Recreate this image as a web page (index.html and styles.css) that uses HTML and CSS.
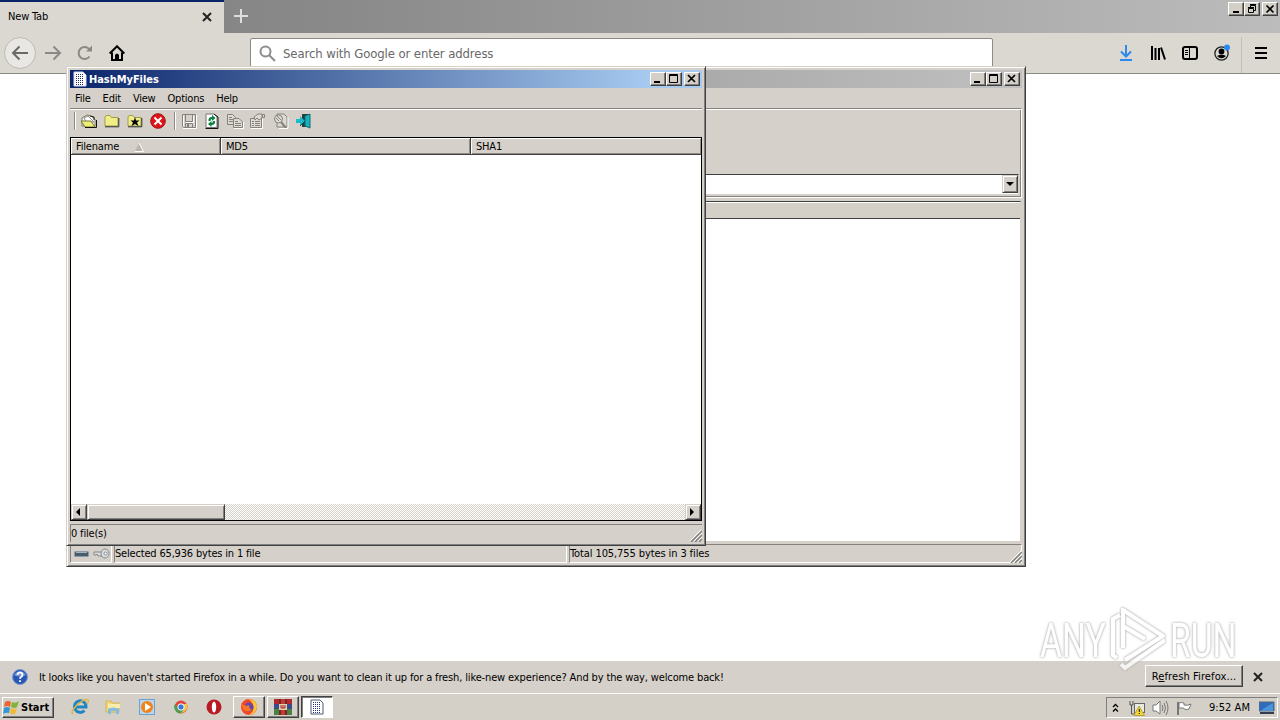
FILE: index.html
```html
<!DOCTYPE html>
<html lang="en">
  <head>
    <meta charset="UTF-8">
    <title>New Tab</title>
    <link rel="stylesheet" href="styles.css">
  </head>
  <body>
    <div class="browser">
      <div class="tabs">
        <div class="tab"><span class="tab-title">New Tab</span>
          <svg width="10" height="10"><path d="M1 1L9 9M9 1L1 9" stroke="#222" stroke-width="2"/></svg>
        </div>
        <svg class="plus" width="14" height="14"><path d="M7 0V14M0 7H14" stroke="#dedede" stroke-width="2"/></svg>
        <div class="controls">
          <span class="btn"><svg width="12" height="10"><path d="M3 8H9" stroke="#000" stroke-width="2"/></svg></span>
          <span class="btn"><svg width="12" height="10" fill="none" stroke="#000"><path d="M4.500 3V1.500H9.500V6.500H8M4 .500H10M2.500 4.500H7.500V8.500H2.500ZM2 3.500H8"/></svg></span>
          <span class="btn close"><svg width="12" height="10"><path d="M2.500 1.500L9.500 8.500M9.500 1.500L2.500 8.500" stroke="#000" stroke-width="1.700"/></svg></span>
        </div>
      </div>
      <div class="nav">
        <div class="nav-left">
          <span class="tool back"><svg width="18" height="16" fill="none" stroke="#6b6966" stroke-width="2"><path d="M17 8H2M8.500 1.500L2 8L8.500 14.500"/></svg></span>
          <span class="tool"><svg width="18" height="16" fill="none" stroke="#8b8986" stroke-width="2"><path d="M1 8H16M9.500 1.500L16 8L9.500 14.500"/></svg></span>
          <span class="tool"><svg width="16" height="16" fill="none" stroke="#8b8986" stroke-width="2"><path d="M12.500 11.500A6 6 0 1 1 12.500 4.500"/><path d="M9 6.500H15V0.500Z" fill="#8b8986" stroke="none"/></svg></span>
          <span class="tool"><svg width="16" height="16" fill="none" stroke="#000" stroke-width="2"><path d="M.7 8.500L8 1.300L15.300 8.500M3 7.500V15H13V7.500"/><path d="M6 15V10Q8 7 10 10V15Z" fill="#000" stroke="none"/></svg></span>
        </div>
        <div class="search">
          <svg width="17" height="17" fill="none" stroke="#8c8c8c" stroke-width="2"><circle cx="6.500" cy="6.500" r="5"/><path d="M10 10L16 16"/></svg>
          <span>Search with Google or enter address</span>
        </div>
        <div class="nav-right">
          <span class="tool"><svg width="14" height="16" fill="none" stroke="#2a8af0" stroke-width="2"><path d="M7 0V11M2 6.500L7 11.500L12 6.500M1 15H13"/></svg></span>
          <span class="tool"><svg width="16" height="16" stroke="#000" stroke-width="2"><path d="M2 1V15M5.500 3V15M9 3V15M11 2.500L15 14.500"/></svg></span>
          <span class="tool"><svg width="16" height="14" fill="none" stroke="#000"><rect x="1" y="1" width="14" height="12" rx="2" stroke-width="2"/><path d="M7.500 1V13M3 4.500H6M3 6.500H6M3 8.500H6"/></svg></span>
          <span class="tool"><svg width="18" height="18"><circle cx="8.500" cy="9.500" r="6.600" fill="none" stroke="#222" stroke-width="1.300"/><circle cx="8.500" cy="7.500" r="2.900"/><path d="M4 12Q8.500 9.500 13 12Q8.500 16.500 4 12Z"/><circle cx="14" cy="3.500" r="3" fill="#2a8af0"/></svg></span>
          <span class="nav-sep"></span>
          <span class="tool"><svg width="12" height="14" stroke="#000" stroke-width="2"><path d="M0 2H12M0 7H12M0 12H12"/></svg></span>
        </div>
      </div>
      <div class="page"></div>
      <div class="notice">
        <svg class="help" width="16" height="16"><circle cx="8" cy="8" r="7.500" fill="#2857b4" stroke="#7c98cf"/><path d="M2 6Q8 -2 14 6Q8 9 2 6" fill="#7097db"/><path d="M5.500 6Q5.500 3.700 8 3.700T10.500 6Q10.500 7 9 8Q8 8.700 8 9.800M8 11.300V13" fill="none" stroke="#fff" stroke-width="1.800"/></svg>
        <span class="notice-text">It looks like you haven't started Firefox in a while. Do you want to clean it up for a fresh, like-new experience? And by the way, welcome back!</span>
        <button class="refresh">R<u>e</u>fresh Firefox...</button>
        <svg class="dismiss" width="10" height="10"><path d="M1 1L9 9M9 1L1 9" stroke="#222" stroke-width="2"/></svg>
      </div>
    </div>

    <div class="window archive">
      <div class="caption inactive">
        <div class="controls">
          <span class="btn"><svg width="12" height="10"><path d="M2 8H8" stroke="#000" stroke-width="2"/></svg></span>
          <span class="btn"><svg width="12" height="10" fill="none" stroke="#000"><path d="M1.500 .500H9.500V8.500H1.500ZM1 1.500H10"/></svg></span>
          <span class="btn close"><svg width="12" height="10"><path d="M2 1L9 8M9 1L2 8" stroke="#000" stroke-width="1.700"/></svg></span>
        </div>
      </div>
      <div class="panel">
        <div class="combo"><span class="drop"><svg width="8" height="4"><path d="M0 0H8L4 4Z"/></svg></span></div>
      </div>
      <div class="files"><div class="files-head"></div></div>
      <div class="archive-status">
        <div class="cell icons">
          <svg width="16" height="8"><rect x=".5" y="1.500" width="14" height="5" rx="1" fill="#4a5d6c" stroke="#8c9aa6"/><path d="M2 2.500H13" stroke="#a7b4bd"/></svg>
          <svg width="17" height="11" fill="none" stroke="#85898c"><path d="M9 4H1V7H3L4 6L5 8H9" fill="#d9dcdd"/><ellipse cx="12" cy="5.500" rx="4" ry="4.500" fill="#d9dcdd"/><circle cx="12.500" cy="5.500" r="1.500" fill="#fff"/></svg>
        </div>
        <div class="cell selected">Selected 65,936 bytes in 1 file</div>
        <div class="cell total">Total 105,755 bytes in 3 files</div>
        <svg class="grip" width="12" height="12"><path d="M1 12L12 1M5 12L12 5M9 12L12 9" stroke="#808080" stroke-width="1.500"/><path d="M0 11L11 0M4 11L12 3M8 11L12 7" stroke="#fff"/></svg>
      </div>
    </div>

    <div class="window hash">
      <div class="caption">
        <svg class="app-icon" width="14" height="16"><path d="M1 1H10L13 4V15H1Z" fill="#fff" stroke="#d5d8e8"/><path d="M3 3.500H11M3 5.500H11M3 7.500H11M3 9.500H11M3 11.500H11M3 13.500H11" stroke="#20275f" stroke-dasharray="1 1"/></svg>
        <span class="title">HashMyFiles</span>
        <div class="controls">
          <span class="btn"><svg width="12" height="10"><path d="M2 8H8" stroke="#000" stroke-width="2"/></svg></span>
          <span class="btn"><svg width="12" height="10" fill="none" stroke="#000"><path d="M1.500 .500H9.500V8.500H1.500ZM1 1.500H10"/></svg></span>
          <span class="btn close"><svg width="12" height="10"><path d="M2 1L9 8M9 1L2 8" stroke="#000" stroke-width="1.700"/></svg></span>
        </div>
      </div>
      <div class="menu"><span>File</span><span>Edit</span><span>View</span><span>Options</span><span>Help</span></div>
      <div class="toolbar">
        <i class="sep"></i>
        <span class="ico"><svg width="16" height="14"><path d="M1 12V4L6 1L10 2L14 5V12Z" fill="#fff" stroke="#7d7c59"/><path d="M3 4L7 2L13 8H5Z" fill="#fff" stroke="#888"/><path d="M0 7H10L14 13H4Z" fill="#eeee76" stroke="#77763c"/><path d="M4 13.500H15.500V6M9 2L13 3V6" fill="none" stroke="#111"/></svg></span>
        <span class="ico"><svg width="16" height="14"><path d="M1 12V3L2 1.500H6L7.500 3.500H14V12Z" fill="#f0ee86" stroke="#a09d4c"/><path d="M1 12.800H14.800V4" fill="none" stroke="#333"/></svg></span>
        <span class="ico"><svg width="16" height="14"><path d="M1 12V3L2 1.500H6L7.500 3.500H14V12Z" fill="#f0ee86" stroke="#a09d4c"/><path d="M1 12.800H14.800V4" fill="none" stroke="#333"/><path d="M8 3L9 6.500H12.500L10 8.500L11.500 12L8 10L4.500 12L6 8.500L3.500 6.500H7Z"/></svg></span>
        <span class="ico"><svg width="16" height="16"><circle cx="8" cy="8" r="7.300" fill="#e01418" stroke="#9d1515"/><path d="M4.500 4.500L11.500 11.500M11.500 4.500L4.500 11.500" stroke="#fff" stroke-width="2"/></svg></span>
        <i class="sep second"></i>
        <span class="ico"><svg width="16" height="16" fill="none"><path d="M1.500 1.500H14.500V14.500H2.500L1.500 13.500ZM4.500 2V8.500H11.500V2M4.500 14V10.500H11.500V14" stroke="#85827d"/><path d="M6 11H8V14H6Z" fill="#85827d"/><path d="M2 15.500H15.500V2M5 9.500H12.500V3M2.500 2.500V13" stroke="#fff"/></svg></span>
        <span class="ico"><svg width="14" height="16"><path d="M1 1H9L12 4V14.500H1Z" fill="#fff" stroke="#777"/><path d="M.5 15.500H13V4L9 1" fill="none" stroke="#111"/><path d="M3.500 8Q3 4 7 4V2L10.500 5L7 8V6Q5.500 6 5.500 8ZM10 8Q10.500 12 6.500 12V14L3 11L6.500 8V10Q8 10 8 8Z" fill="#08813c"/></svg></span>
        <span class="ico"><svg width="18" height="16" fill="#ddd9d3" stroke="#85827d"><path d="M1.500 1.500H6.500L9.500 4.500V11.500H1.500ZM3 4.500H6M3 6.500H8M3 8.500H8"/><path d="M7.500 5.500H13L16.500 9V14.500H7.500ZM9 8.500H12M9 10.500H15M9 12.500H15"/><path d="M8 15.500H17.500V9" fill="none" stroke="#fff"/></svg></span>
        <span class="ico"><svg width="17" height="16" fill="#ddd9d3" stroke="#85827d"><path d="M1.500 5.500H12.500V14.500H1.500ZM3 8.500H5M3 10.500H5M3 12.500H5M6 8.500H11M6 10.500H11M6 12.500H11"/><path d="M5 4L9 1H13V5L10 7L8 5L6 7Z"/><path d="M13.500 1.500H15.500V4.500H13.500Z"/><path d="M2 15.500H13.500V6" fill="none" stroke="#fff"/></svg></span>
        <span class="ico"><svg width="16" height="16" fill="#ddd9d3" stroke="#85827d"><path d="M4 1H11L14 4V14H4Z"/><circle cx="5.500" cy="6" r="4"/><path d="M8 9L13 15" stroke-width="2"/><path d="M3 5L6 8M4 3L8 7"/><path d="M6 15.500H15V4" fill="none" stroke="#fff"/></svg></span>
        <span class="ico"><svg width="16" height="16"><path d="M6 1H14V14H6Z" fill="#263f3f"/><path d="M9 3L14 1V15L9 13Z" fill="#17b4bd" stroke="#156d75"/><path d="M0 6H4V3L9 8L4 13V10H0Z" fill="#1cbbc9"/><path d="M4 13L9 8" stroke="#174e55"/></svg></span>
      </div>
      <div class="list">
        <div class="list-head">
          <span class="col filename"><span>Filename</span><svg width="10" height="9"><path d="M5 0L9 8H1Z" fill="#bab6af"/><path d="M5 0L9.500 8.500H1" fill="none" stroke="#fff"/></svg></span><span class="col md5">MD5</span><span class="col sha">SHA1</span>
        </div>
        <div class="rows"></div>
        <div class="scroll">
          <span class="arrow"><svg width="4" height="8"><path d="M4 0V8L0 4Z"/></svg></span>
          <span class="thumb"></span>
          <span class="arrow end"><svg width="4" height="8"><path d="M0 0V8L4 4Z"/></svg></span>
        </div>
      </div>
      <div class="status"><span>0 file(s)</span>
        <svg class="grip" width="12" height="12"><path d="M1 12L12 1M5 12L12 5M9 12L12 9" stroke="#808080" stroke-width="1.500"/><path d="M0 11L11 0M4 11L12 3M8 11L12 7" stroke="#fff"/></svg>
      </div>
    </div>

    <div class="taskbar">
      <button class="start"><svg width="17" height="16"><path d="M2 2Q5 0 8 2L7 7Q4 5 1 7Z" fill="#ef642b"/><path d="M9 2Q12 4 16 1L14 7Q11 9 8 7Z" fill="#82b43b"/><path d="M1 8Q4 6 7 8L6 13Q3 12 0 14Z" fill="#3298d4"/><path d="M8 8Q11 10 14 8L12 14Q9 15 7 13Z" fill="#f3b936"/></svg><span>Start</span></button>
      <div class="quick">
        <span><svg width="18" height="18" fill="none"><path d="M13.500 12.500A5.800 5.800 0 1 1 15 9H5" stroke="#2185c4" stroke-width="3"/><path d="M2 16Q-1 14 6 7Q14 0 17 2Q18 3 16 6" stroke="#e2b53e" stroke-width="1.500"/></svg></span>
        <span><svg width="16" height="16"><path d="M1 2H6L7 4H14V13H1Z" fill="#efd77a" stroke="#d1b65b"/><path d="M3 5H15V9H3Z" fill="#f9ebac"/><path d="M3 15V10Q8 7 14 10V15H11V12H6V15Z" fill="#84bbdf"/></svg></span>
        <span><svg width="16" height="16"><rect x=".5" y=".5" width="15" height="15" fill="#b7d7ee" stroke="#6ca2cf"/><circle cx="8" cy="8" r="6" fill="#f18419"/><path d="M6 4L12 8L6 12Z" fill="#fff"/></svg></span>
        <span><svg width="14" height="14"><circle cx="7" cy="7" r="6.500" fill="#e2463a"/><path d="M1 4L6 13.500A6.500 6.500 0 0 1 1 4" fill="#3ba757"/><path d="M8 4H13Q15 11 6 13.500L10 8Z" fill="#f4c642"/><path d="M1 4L7 13.500L10 9L4 7Z" fill="#3ba757"/><circle cx="7" cy="7" r="3.200" fill="#3679dc" stroke="#fff"/></svg></span>
        <span><svg width="16" height="16"><circle cx="8" cy="8" r="7.500" fill="#b91920"/><ellipse cx="8" cy="8" rx="2.200" ry="5.500" fill="#fff"/></svg></span>
      </div>
      <div class="tasks">
        <span class="task"><svg width="18" height="18"><circle cx="9" cy="9" r="8" fill="#f34728"/><path d="M8 1Q17 2 17 9Q16 16 9 17Q15 13 13 7Q12 3 8 1" fill="#ffc52d"/><circle cx="9" cy="9" r="4.500" fill="#6446b2"/><path d="M1 5Q4 9 9 7Q9 11 12 12Q7 15 3 11Z" fill="#f77724"/></svg></span>
        <span class="task"><svg width="18" height="16"><path d="M0 0H18V5H0Z" fill="#b3282f"/><path d="M0 5H18V10H0Z" fill="#394c8d"/><path d="M0 10H18V16H0Z" fill="#4c8145"/><path d="M5 0H7V16H5ZM11 0H13V16H11Z" fill="#6e2b20"/><path d="M7 0H11V16H7Z" fill="#c9363a"/><path d="M5 5H13V11H5Z" fill="#e8d0aa"/><path d="M7 6V9H11V6M9 6V9" stroke="#a12627" fill="none"/></svg></span>
        <span class="task pressed"><svg width="14" height="16"><path d="M1 1H10L13 4V15H1Z" fill="#fff" stroke="#50586d"/><path d="M3 3.500H11M3 5.500H11M3 7.500H11M3 9.500H11M3 11.500H11M3 13.500H11" stroke="#252e8a" stroke-dasharray="1 1"/></svg></span>
      </div>
      <div class="tray">
        <svg class="chev" width="7" height="10" fill="none" stroke="#000" stroke-width="1.300"><path d="M1 4L3.500 1.500L6 4M1 8.500L3.500 6L6 8.500"/></svg>
        <svg class="net" width="16" height="16"><path d="M1 1V5H4V1M2.500 5V14H7" fill="none" stroke="#555"/><rect x="5.500" y="3.500" width="10" height="9" fill="#e8e8e5" stroke="#666"/><path d="M10 6L15.500 15.500H5Z" fill="#f3d631" stroke="#b6a33b"/><path d="M10.300 9V12M10.300 13V14" stroke="#111"/></svg>
        <svg class="sound" width="17" height="16" fill="none" stroke="#777"><path d="M1 5H4L8 1V14L4 11H1Z" fill="#fff"/><path d="M10 5Q12 8 10 11M12 3Q15 8 12 13M14 1Q18 8 14 15"/></svg>
        <svg class="flag" width="16" height="16"><path d="M2 2V15" stroke="#777" stroke-width="2"/><path d="M3 3Q5 2 8 3V5Q11 6 15 4L13 9Q10 11 7 8H3Z" fill="#fff" stroke="#777"/></svg>
        <span class="clock">9:52 AM</span>
        <svg class="desk" width="16" height="14"><path d="M0 1H15V10H0Z" fill="#316cbc" stroke="#5b6676"/><path d="M1 10L14 2V10Z" fill="#4a94d9"/><path d="M1 12H15" stroke="#343d50" stroke-width="2"/></svg>
      </div>
    </div>

    <div class="watermark">
      <span class="word">ANY</span>
      <svg width="56" height="66" fill="none" stroke="#fff" stroke-width="4"><path d="M11 7L4 11V47L8 50M14 40V2L54 28L16 52M14 18L36 31M12 56L16 60L56 32"/></svg>
      <span class="word">RUN</span>
    </div>
  </body>
</html>
```

FILE: styles.css
```css
* {
    box-sizing: border-box;
}
body {
    margin: 0;
    width: 1280px;
    height: 720px;
    overflow: hidden;
    display: flex;
    flex-direction: column;
    background: #fff;
    color: #000;
    font: 11px/14px "DejaVu Sans Condensed", "DejaVu Sans", sans-serif;
    font-stretch: condensed;
    letter-spacing: -0.18px;
    white-space: nowrap;
}
svg {
    display: block;
    flex: none;
}
button {
    font: inherit;
    letter-spacing: inherit;
    color: inherit;
    padding: 0;
}
.browser {
    flex: 1;
    display: flex;
    flex-direction: column;
}
.tabs {
    height: 33px;
    display: flex;
    background: linear-gradient(90deg, #808080, #898989 25%, #bcbcbc);
}
.tab {
    width: 224px;
    padding: 0 12px 1px 8px;
    display: flex;
    align-items: center;
    justify-content: space-between;
    background: #dbd8d2;
    border-top: 2px solid #0a246a;
}
.plus {
    margin: 9px 0 0 10px;
}
.controls {
    margin-left: auto;
    display: flex;
}
.tabs .controls {
    padding: 2px 2px 0 0;
}
.btn {
    width: 16px;
    height: 14px;
    padding: 1px;
    background: #d4d0c8;
    border: 1px solid;
    border-color: #fff #404040 #404040 #fff;
    box-shadow: inset -1px -1px #808080;
}
.btn.close {
    margin-left: 2px;
}
.nav {
    height: 41px;
    display: flex;
    background: #dbd8d2;
    border-bottom: 1px solid #8b8984;
}
.nav-left {
    width: 250px;
    padding: 4px 0 0 4px;
    display: flex;
}
.tool {
    width: 32px;
    height: 32px;
    display: flex;
    align-items: center;
    justify-content: center;
}
.back {
    margin-right: 1px;
    background: #e9e7e3;
    border: 1px solid #bdbab5;
    border-radius: 50%;
}
.search {
    width: 743px;
    height: 32px;
    margin-top: 5px;
    padding: 0 8px 1px;
    display: flex;
    align-items: center;
    gap: 7px;
    background: #fff;
    border: 1px solid #8e8b87;
    border-radius: 2px;
    color: #686868;
    font-size: 13px;
    letter-spacing: -0.1px;
}
.nav-right {
    margin-left: auto;
    padding: 4px 3px 0 0;
    display: flex;
}
.nav-sep {
    width: 1px;
    margin: 0 3px;
    background: #c3c0bb;
}
.page {
    flex: 1;
}
.notice {
    height: 32px;
    padding: 0 17px 0 12px;
    display: flex;
    align-items: center;
    background: #d5d0c9;
}
.notice-text {
    margin: 1px 0 0 11px;
    letter-spacing: -0.14px;
}
.refresh {
    width: 98px;
    height: 22px;
    margin: -2px 10px 0 auto;
    padding-top: 1px;
    background: #d5d0c9;
    border: 1px solid;
    border-color: #fff #404040 #404040 #fff;
    box-shadow: inset -1px -1px #808080;
    letter-spacing: 0.1px;
}

/* windows */
.window {
    position: absolute;
    left: 66px;
    top: 66px;
    padding: 2px;
    display: flex;
    flex-direction: column;
    background: #d5d0c9;
    border: 1px solid;
    border-color: #d4d0c8 #404040 #404040 #d4d0c8;
    box-shadow: inset 1px 1px #fff, inset -1px -1px #808080;
}
.archive {
    width: 960px;
    height: 501px;
}
.hash {
    width: 640px;
    height: 480px;
    padding: 3px;
}
.caption {
    height: 18px;
    padding: 0 2px 0 3px;
    display: flex;
    align-items: center;
    background: linear-gradient(90deg, #0a246a, #a6caf0 92%);
}
.inactive {
    margin: 1px;
    background: linear-gradient(90deg, #808080, #c0c0c0);
}
.title {
    margin: 1px 0 0 2px;
    color: #fff;
    font-weight: bold;
    letter-spacing: -0.05px;
}
.menu {
    height: 20px;
    padding: 4px 5px 2px;
    display: flex;
    letter-spacing: -0.22px;
}
.menu span {
    margin-right: 12px;
}
.toolbar {
    height: 29px;
    padding: 0 0 4px 4px;
    display: flex;
    align-items: center;
    border-top: 1px solid #85827d;
    box-shadow: inset 0 1px #fff;
}
.sep {
    width: 2px;
    height: 18px;
    margin-right: 1px;
    background: #8b8883;
    border-right: 1px solid #fff;
}
.sep.second {
    margin-left: 5px;
}
.ico {
    width: 23px;
    display: flex;
    justify-content: center;
}
.list {
    height: 384px;
    display: flex;
    flex-direction: column;
    border: 1px solid #000;
    background: #fff;
}
.list-head {
    height: 17px;
    display: flex;
    background: #d5d0c9;
    border-bottom: 1px solid #404040;
}
.col {
    padding: 2px 5px 0;
    border-right: 1px solid #404040;
    box-shadow: inset 1px 1px #fff, inset -1px -1px #908d87;
}
.filename {
    width: 150px;
    display: flex;
    align-items: center;
    gap: 15px;
}
.md5 {
    width: 250px;
}
.sha {
    flex: 1;
    border: 0;
}
.rows {
    flex: 1;
}
.scroll {
    height: 16px;
    display: flex;
    background: repeating-conic-gradient(#fff 0 25%, #d4d0c8 0 50%) 0 0 / 2px 2px;
}
.arrow, .thumb, .drop {
    display: flex;
    align-items: center;
    justify-content: center;
    background: #d5d0c9;
    border: 1px solid;
    border-color: #d4d0c8 #404040 #404040 #d4d0c8;
    box-shadow: inset 1px 1px #fff, inset -1px -1px #808080;
}
.arrow {
    width: 16px;
    padding: 0 2px 1px 0;
}
.thumb {
    width: 138px;
}
.end {
    margin-left: auto;
}
.status {
    flex: 1;
    margin-top: 3px;
    display: flex;
    align-items: center;
    justify-content: space-between;
    border-top: 1px solid #85827d;
    border-left: 1px solid #85827d;
}
.grip {
    align-self: flex-end;
}
.panel {
    height: 90px;
    margin: 19px 1px 0;
    padding: 0 2px 2px 1px;
    display: flex;
    align-items: flex-end;
    border: 1px solid;
    border-color: #85827d #fff #fff #85827d;
    box-shadow: inset 0 1px #fff, inset -1px -1px #85827d;
}
.combo {
    width: 100%;
    height: 21px;
    padding-bottom: 1px;
    display: flex;
    justify-content: flex-end;
    background: #fff;
    border: 1px solid;
    border-color: #404040 #d4d0c8 #d4d0c8 #404040;
}
.drop {
    width: 16px;
}
.files {
    flex: 1;
    margin: 3px 2px 0 1px;
    background: #fff;
    border: 1px solid;
    border-color: #404040 #d4d0c8 #d4d0c8 #404040;
}
.files-head {
    height: 17px;
    background: #d4d0c8;
    border-top: 1px solid #fff;
    border-bottom: 1px solid #404040;
}
.archive-status {
    height: 19px;
    margin: 2px 1px 1px;
    display: flex;
    gap: 2px;
}
.cell {
    padding-top: 2px;
    border: 1px solid;
    border-color: #85827d #fff #fff #85827d;
}
.icons {
    width: 42px;
    padding: 0 0 0 2px;
    display: flex;
    align-items: center;
    justify-content: center;
    gap: 3px;
}
.selected {
    width: 453px;
}
.total {
    flex: 1;
    margin-right: -14px;
    letter-spacing: -0.1px;
}

/* taskbar */
.taskbar {
    height: 27px;
    padding: 2px 2px 1px;
    display: flex;
    background: #d4d0c8;
    border-top: 1px solid #fff;
}
.start {
    width: 52px;
    height: 21px;
    margin-top: 1px;
    display: flex;
    align-items: center;
    gap: 1px;
    background: #d4d0c8;
    border: 1px solid;
    border-color: #fff #404040 #404040 #fff;
    box-shadow: inset -1px -1px #808080;
    font-weight: bold;
    letter-spacing: 0;
}
.quick {
    width: 168px;
    margin-left: 9px;
    padding-bottom: 2px;
    display: flex;
}
.quick span {
    width: 33.600px;
    display: flex;
    align-items: center;
    justify-content: center;
}
.tasks {
    margin-left: 2px;
    display: flex;
    gap: 2px;
}
.task {
    width: 32px;
    height: 22px;
    display: flex;
    align-items: center;
    justify-content: center;
    border: 1px solid;
    border-color: #fff #404040 #404040 #fff;
    box-shadow: inset -1px -1px #808080;
}
.pressed {
    background: #fff;
    border-color: #404040 #fff #fff #404040;
    box-shadow: inset 1px 1px #808080;
}
.tray {
    width: 172px;
    height: 21px;
    margin: 1px 0 0 auto;
    padding: 0 0 0 5px;
    display: flex;
    align-items: center;
    border: 1px solid;
    border-color: #808080 #fff #fff #808080;
}
.net {
    margin-left: 10px;
}
.sound, .flag {
    margin-left: 7px;
}
.clock {
    width: 42px;
    margin-left: 17px;
    letter-spacing: 0.05px;
}
.desk {
    margin-left: 8px;
}

/* recorder logo over the page */
.watermark {
    position: absolute;
    left: 1040px;
    top: 607px;
    width: 194px;
    height: 68px;
    display: flex;
    align-items: center;
    justify-content: space-between;
    color: #fff;
    opacity: 0.75;
    filter: drop-shadow(0 0 1px #999) drop-shadow(0 0 1px #ccc);
    font: 48px/56px Roboto, sans-serif;
    letter-spacing: 0;
}
.word {
    width: 64px;
    transform: scaleX(0.7);
    transform-origin: 0 0;
}
```
